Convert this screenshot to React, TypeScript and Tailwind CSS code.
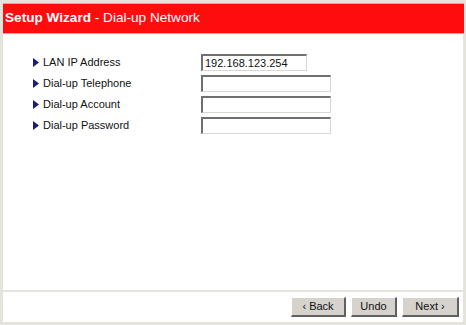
import React from "react";

const font = { fontFamily: '"Liberation Sans", Arial, sans-serif' };

function Row({ label, value, wide }: { label: string; value?: string; wide?: boolean }) {
  return (
    <div className="flex items-center h-[21px]">
      <div className="w-[198px] flex items-center pl-[30px]">
        <svg width="6" height="9" viewBox="0 0 6 9" className="mr-[4px]">
          <polygon points="0,0 6,4.5 0,9" fill="#1c1c7a" />
        </svg>
        <span className="text-[11px] text-[#111]">{label}</span>
      </div>
      <div
        className={`h-[17px] ${wide ? "w-[130px]" : "w-[106px]"} bg-white border-t-2 border-l-2 border-t-[#707070] border-l-[#707070] border-b border-r border-b-[#d8d8d0] border-r-[#d8d8d0] text-[11px] text-[#111] leading-[14px] pl-[2px]`}
      >
        {value}
      </div>
    </div>
  );
}

function Btn({ children, w }: { children: React.ReactNode; w: string }) {
  return (
    <div
      className={`${w} h-[20px] bg-[#d6d3ce] border-t border-l border-t-white border-l-white border-b-2 border-r-2 border-b-[#606060] border-r-[#606060] flex items-center justify-center text-[11px] text-[#111]`}
    >
      {children}
    </div>
  );
}

export default function App() {
  return (
    <div style={font} className="w-[466px] h-[325px] bg-[#e4e4dc] p-[3px] pr-[2px] pb-[3px] flex">
      <div className="flex-1 flex flex-col bg-white">
        <div className="h-[31px] bg-[#ff0d0d] border-y border-[#f49a9a] flex items-center pl-[2px] text-white text-[13.6px]">
          <span className="font-bold">Setup Wizard</span>
          <span>&nbsp;- Dial-up Network</span>
        </div>
        <div className="flex-1 pt-[18px] border-r border-[#e4e4dc]">
          <Row label="LAN IP Address" value="192.168.123.254" />
          <Row label="Dial-up Telephone" wide />
          <Row label="Dial-up Account" wide />
          <Row label="Dial-up Password" wide />
        </div>
        <div className="h-[2px] bg-[#e4e4dc]" />
        <div className="h-[30px] flex items-center justify-end gap-[5px] pr-[4px] border-r border-[#e4e4dc]">
          <Btn w="w-[55px]">‹ Back</Btn>
          <Btn w="w-[46px]">Undo</Btn>
          <Btn w="w-[57px]">Next ›</Btn>
        </div>
      </div>
    </div>
  );
}
